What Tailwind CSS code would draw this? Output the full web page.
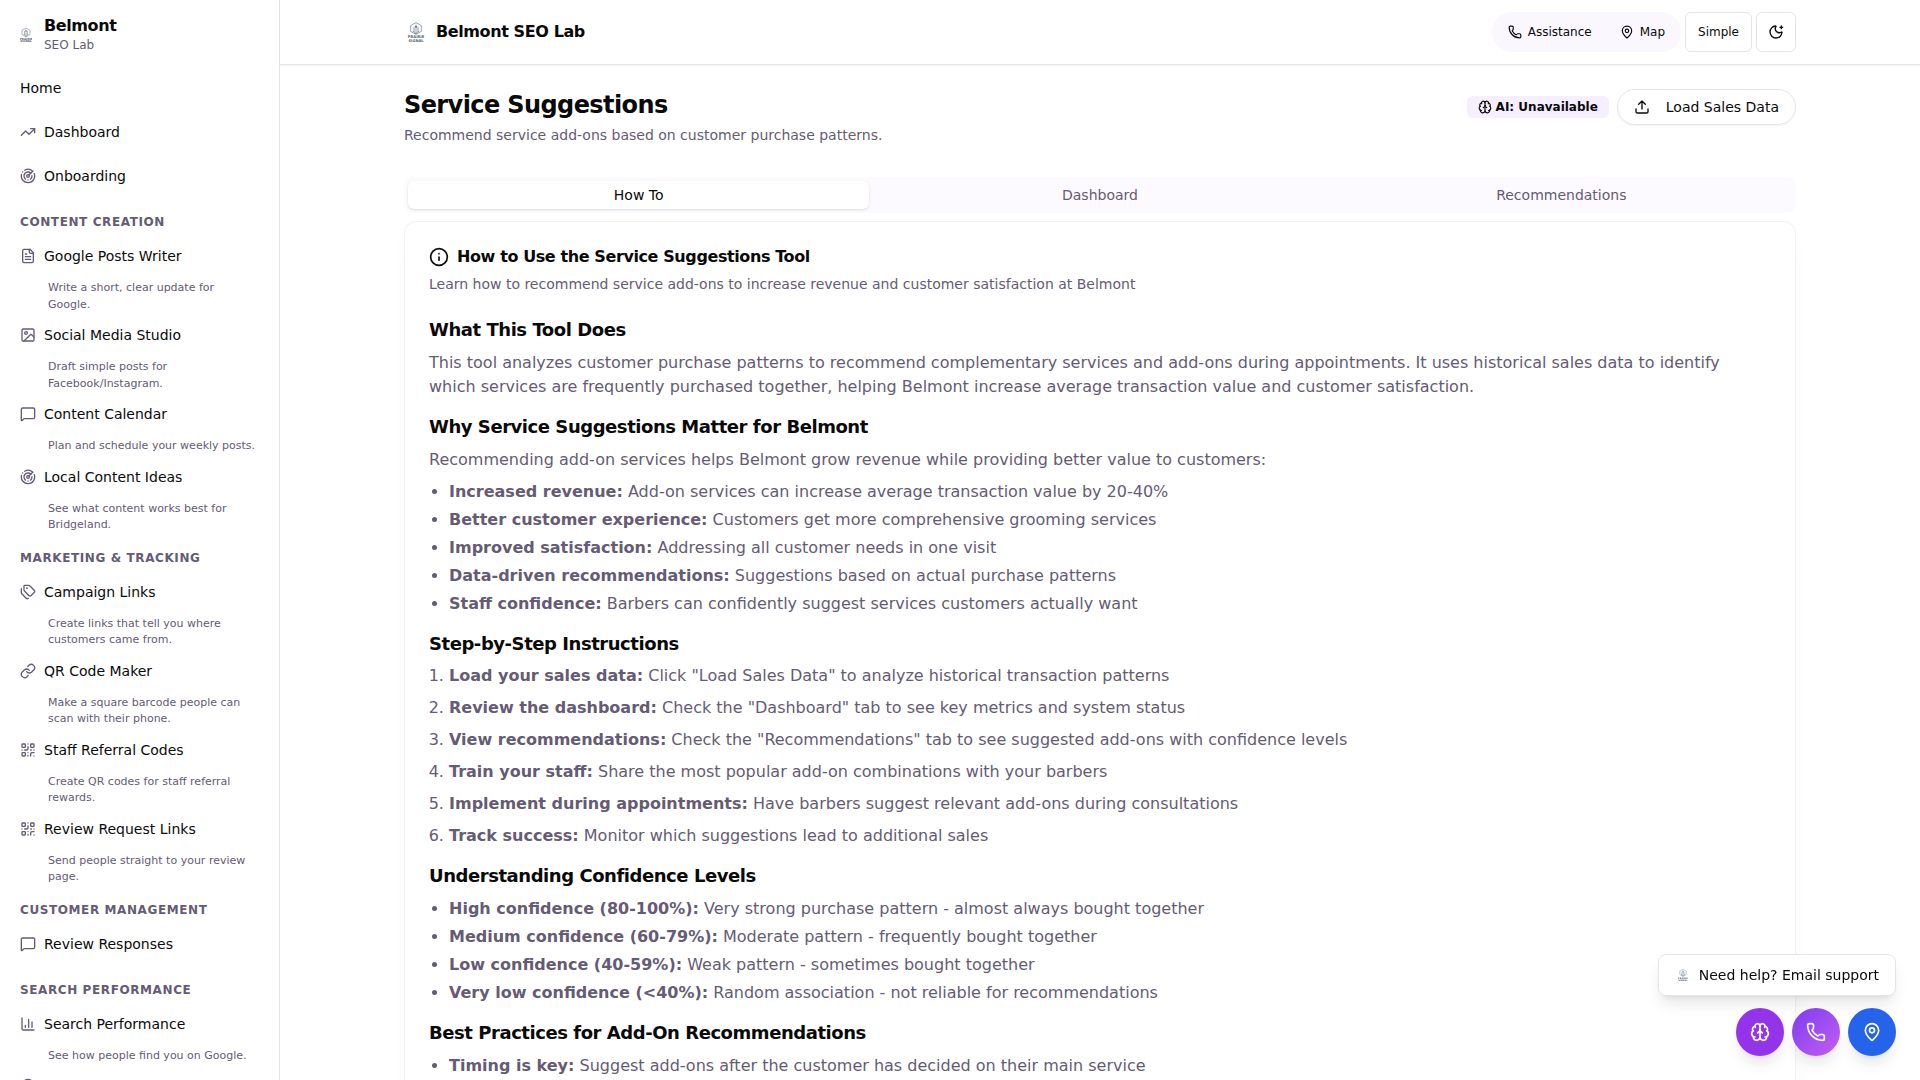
<!DOCTYPE html>
<html lang="en">
<head>
<meta charset="utf-8">
<meta name="viewport" content="width=device-width, initial-scale=1">
<title>Belmont SEO Lab</title>
<script src="https://cdn.jsdelivr.net/npm/@tailwindcss/browser@4"></script>
</head>
<body class="bg-white font-['DejaVu_Sans',sans-serif] text-[#0a0a0a]">

<svg class="hidden" aria-hidden="true">
  <symbol id="logo" viewBox="0 0 24 30">
    <g fill="none" stroke="#7b8794" stroke-width="1.200">
      <path d="M12 1l8 4.500v8.500l-8 4.500-8-4.500V5.500z"/>
      <path d="M12 4v14M9 7v8M15 7v8M7 14c2 0 4 2 5 4 1-2 3-4 5-4"/>
    </g>
    <circle cx="12" cy="7" r="1.500" fill="#64748b"/>
    <text x="12" y="24" text-anchor="middle" font-size="5.500" font-weight="700" fill="#566373">PRAIRIE</text>
    <text x="12" y="29.500" text-anchor="middle" font-size="5.500" font-weight="700" fill="#566373">SIGNAL</text>
  </symbol>
  <symbol id="trend" viewBox="0 0 24 24"><path d="m22 7-8.500 8.500-5-5L2 17"/><path d="M16 7h6v6"/></symbol>
  <symbol id="radar" viewBox="0 0 24 24"><path d="M19.070 4.930A10 10 0 0 0 6.990 3.340"/><path d="M4 6h.01"/><path d="M2.290 9.620A10 10 0 1 0 21.310 8.350"/><path d="M16.240 7.760A6 6 0 1 0 8.230 16.670"/><path d="M12 18h.01"/><path d="M17.990 11.660A6 6 0 0 1 15.770 16.670"/><circle cx="12" cy="12" r="2"/><path d="m13.410 10.590 5.660-5.660"/></symbol>
  <symbol id="file" viewBox="0 0 24 24"><path d="M15 2H6a2 2 0 0 0-2 2v16a2 2 0 0 0 2 2h12a2 2 0 0 0 2-2V7Z"/><path d="M14 2v4a2 2 0 0 0 2 2h4"/><path d="M10 9H8M16 13H8M16 17H8"/></symbol>
  <symbol id="image" viewBox="0 0 24 24"><rect width="18" height="18" x="3" y="3" rx="2"/><circle cx="9" cy="9" r="2"/><path d="m21 15-3.086-3.086a2 2 0 0 0-2.828 0L6 21"/></symbol>
  <symbol id="message" viewBox="0 0 24 24"><path d="M22 17a2 2 0 0 1-2 2H6.828a2 2 0 0 0-1.414.586l-2.202 2.202A.71.71 0 0 1 2 21.286V5a2 2 0 0 1 2-2h16a2 2 0 0 1 2 2z"/></symbol>
  <symbol id="tags" viewBox="0 0 24 24"><path d="M13.172 2a2 2 0 0 1 1.414.586l6.710 6.710a2.400 2.400 0 0 1 0 3.408l-4.592 4.592a2.400 2.400 0 0 1-3.408 0l-6.710-6.710A2 2 0 0 1 6 9.172V3a1 1 0 0 1 1-1z"/><path d="M2 7v6.172a2 2 0 0 0 .586 1.414l6.710 6.710a2.400 2.400 0 0 0 3.191.193"/><circle cx="10.500" cy="6.500" r=".5" fill="currentColor"/></symbol>
  <symbol id="link" viewBox="0 0 24 24"><path d="M10 13a5 5 0 0 0 7.540.54l3-3a5 5 0 0 0-7.070-7.070l-1.720 1.710"/><path d="M14 11a5 5 0 0 0-7.540-.54l-3 3a5 5 0 0 0 7.070 7.070l1.710-1.710"/></symbol>
  <symbol id="qr" viewBox="0 0 24 24"><rect width="5" height="5" x="3" y="3" rx="1"/><rect width="5" height="5" x="16" y="3" rx="1"/><rect width="5" height="5" x="3" y="16" rx="1"/><path d="M21 16h-3a2 2 0 0 0-2 2v3M21 21v.01M12 7v3a2 2 0 0 1-2 2H7M3 12h.01M12 3h.01M12 16v.01M16 12h1M21 12v.01M12 21v-1"/></symbol>
  <symbol id="chart" viewBox="0 0 24 24"><path d="M3 3v16a2 2 0 0 0 2 2h16M18 17V9M13 17V5M8 17v-3"/></symbol>
  <symbol id="pin" viewBox="0 0 24 24"><path d="M20 10c0 4.993-5.539 10.193-7.399 11.799a1 1 0 0 1-1.202 0C9.539 20.193 4 14.993 4 10a8 8 0 0 1 16 0"/><circle cx="12" cy="10" r="3"/></symbol>
  <symbol id="phone" viewBox="0 0 24 24"><path d="M13.832 16.568a1 1 0 0 0 1.213-.303l.355-.465A2 2 0 0 1 17 15h3a2 2 0 0 1 2 2v3a2 2 0 0 1-2 2A18 18 0 0 1 2 4a2 2 0 0 1 2-2h3a2 2 0 0 1 2 2v3a2 2 0 0 1-.8 1.600l-.468.351a1 1 0 0 0-.292 1.233 14 14 0 0 0 6.392 6.384"/></symbol>
  <symbol id="moon" viewBox="0 0 24 24"><path d="M18 5h4M20 3v4"/><path d="M20.985 12.486a9 9 0 1 1-9.473-9.472c.405-.022.617.46.402.803a6 6 0 0 0 8.268 8.268c.344-.215.825-.004.803.401"/></symbol>
  <symbol id="upload" viewBox="0 0 24 24"><path d="M12 3v12M17 8l-5-5-5 5M21 15v4a2 2 0 0 1-2 2H5a2 2 0 0 1-2-2v-4"/></symbol>
  <symbol id="info" viewBox="0 0 24 24"><circle cx="12" cy="12" r="10"/><path d="M12 16v-4M12 8h.01"/></symbol>
  <symbol id="brain" viewBox="0 0 24 24"><path d="M12 18V5"/><path d="M15 13a4.170 4.170 0 0 1-3-4 4.170 4.170 0 0 1-3 4"/><path d="M17.598 6.500A3 3 0 1 0 12 5a3 3 0 1 0-5.598 1.500"/><path d="M17.997 5.125a4 4 0 0 1 2.526 5.770"/><path d="M18 18a4 4 0 0 0 2-7.464"/><path d="M19.967 17.483A4 4 0 1 1 12 18a4 4 0 1 1-7.967-.517"/><path d="M6 18a4 4 0 0 1-2-7.464"/><path d="M6.003 5.125a4 4 0 0 0-2.526 5.770"/></symbol>
</svg>

<div class="flex h-screen overflow-hidden">
  <aside class="w-[280px] shrink-0 overflow-hidden border-r border-[#e5e5e5]">
    <div class="flex h-[66px] items-center gap-3 px-5 pt-1">
      <svg class="h-4 w-3 shrink-0"><use href="#logo"/></svg>
      <div>
        <div class="text-base leading-5 font-bold tracking-tight">Belmont</div>
        <div class="text-xs leading-[18px] text-[#655b74]">SEO Lab</div>
      </div>
    </div>
    <nav class="text-sm">
      <a href="#" class="flex h-11 items-center px-5">Home</a>
      <a href="#" class="flex h-11 items-center gap-2 px-5"><svg class="size-4 fill-none stroke-[#655b74] stroke-2" stroke-linecap="round" stroke-linejoin="round"><use href="#trend"/></svg>Dashboard</a>
      <a href="#" class="flex h-11 items-center gap-2 px-5"><svg class="size-4 fill-none stroke-[#655b74] stroke-2" stroke-linecap="round" stroke-linejoin="round"><use href="#radar"/></svg>Onboarding</a>

      <h2 class="px-5 pt-4 pb-1 text-xs leading-4 font-bold tracking-wider text-[#655b74] uppercase">Content Creation</h2>
      <a href="#" class="flex h-11 items-center gap-2 px-5"><svg class="size-4 fill-none stroke-[#655b74] stroke-2" stroke-linecap="round" stroke-linejoin="round"><use href="#file"/></svg>Google Posts Writer</a>
      <p class="pt-0.5 pr-5 pl-12 text-[11px] leading-normal text-[#655b74]">Write a short, clear update for Google.</p>
      <a href="#" class="flex h-11 items-center gap-2 px-5"><svg class="size-4 fill-none stroke-[#655b74] stroke-2" stroke-linecap="round" stroke-linejoin="round"><use href="#image"/></svg>Social Media Studio</a>
      <p class="pt-0.5 pr-5 pl-12 text-[11px] leading-normal text-[#655b74]">Draft simple posts for Facebook/Instagram.</p>
      <a href="#" class="flex h-11 items-center gap-2 px-5"><svg class="size-4 fill-none stroke-[#655b74] stroke-2" stroke-linecap="round" stroke-linejoin="round"><use href="#message"/></svg>Content Calendar</a>
      <p class="pt-0.5 pr-5 pl-12 text-[11px] leading-normal text-[#655b74]">Plan and schedule your weekly posts.</p>
      <a href="#" class="flex h-11 items-center gap-2 px-5"><svg class="size-4 fill-none stroke-[#655b74] stroke-2" stroke-linecap="round" stroke-linejoin="round"><use href="#radar"/></svg>Local Content Ideas</a>
      <p class="pt-0.5 pr-5 pl-12 text-[11px] leading-normal text-[#655b74]">See what content works best for Bridgeland.</p>

      <h2 class="px-5 pt-4 pb-1 text-xs leading-4 font-bold tracking-wider text-[#655b74] uppercase">Marketing &amp; Tracking</h2>
      <a href="#" class="flex h-11 items-center gap-2 px-5"><svg class="size-4 fill-none stroke-[#655b74] stroke-2" stroke-linecap="round" stroke-linejoin="round"><use href="#tags"/></svg>Campaign Links</a>
      <p class="pt-0.5 pr-5 pl-12 text-[11px] leading-normal text-[#655b74]">Create links that tell you where customers came from.</p>
      <a href="#" class="flex h-11 items-center gap-2 px-5"><svg class="size-4 fill-none stroke-[#655b74] stroke-2" stroke-linecap="round" stroke-linejoin="round"><use href="#link"/></svg>QR Code Maker</a>
      <p class="pt-0.5 pr-5 pl-12 text-[11px] leading-normal text-[#655b74]">Make a square barcode people can scan with their phone.</p>
      <a href="#" class="flex h-11 items-center gap-2 px-5"><svg class="size-4 fill-none stroke-[#655b74] stroke-2" stroke-linecap="round" stroke-linejoin="round"><use href="#qr"/></svg>Staff Referral Codes</a>
      <p class="pt-0.5 pr-5 pl-12 text-[11px] leading-normal text-[#655b74]">Create QR codes for staff referral rewards.</p>
      <a href="#" class="flex h-11 items-center gap-2 px-5"><svg class="size-4 fill-none stroke-[#655b74] stroke-2" stroke-linecap="round" stroke-linejoin="round"><use href="#qr"/></svg>Review Request Links</a>
      <p class="pt-0.5 pr-5 pl-12 text-[11px] leading-normal text-[#655b74]">Send people straight to your review page.</p>

      <h2 class="px-5 pt-4 pb-1 text-xs leading-4 font-bold tracking-wider text-[#655b74] uppercase">Customer Management</h2>
      <a href="#" class="flex h-11 items-center gap-2 px-5"><svg class="size-4 fill-none stroke-[#655b74] stroke-2" stroke-linecap="round" stroke-linejoin="round"><use href="#message"/></svg>Review Responses</a>

      <h2 class="px-5 pt-4 pb-1 text-xs leading-4 font-bold tracking-wider text-[#655b74] uppercase">Search Performance</h2>
      <a href="#" class="flex h-11 items-center gap-2 px-5"><svg class="size-4 fill-none stroke-[#655b74] stroke-2" stroke-linecap="round" stroke-linejoin="round"><use href="#chart"/></svg>Search Performance</a>
      <p class="pt-0.5 pr-5 pl-12 text-[11px] leading-normal text-[#655b74]">See how people find you on Google.</p>
      <a href="#" aria-label="Map" class="flex h-11 items-center gap-2 px-5"><svg class="size-4 fill-none stroke-[#655b74] stroke-2" stroke-linecap="round" stroke-linejoin="round"><use href="#pin"/></svg></a>
    </nav>
  </aside>

  <div class="flex min-w-0 flex-1 flex-col">
    <header class="border-b border-[#e5e5e5] shadow-xs">
      <div class="mx-auto flex h-16 max-w-[1440px] items-center justify-between px-6">
        <div class="flex items-center gap-2">
          <svg class="h-5 w-6"><use href="#logo"/></svg>
          <span class="text-base font-bold tracking-tight">Belmont SEO Lab</span>
        </div>
        <div class="flex items-center gap-1 text-xs">
          <div class="flex h-10 items-center rounded-full bg-[#faf7ff] px-1">
            <a href="#" class="flex h-8 items-center gap-1.5 px-3"><svg class="size-3.5 fill-none stroke-current stroke-2" stroke-linecap="round" stroke-linejoin="round"><use href="#phone"/></svg>Assistance</a>
            <a href="#" class="flex h-8 items-center gap-1.5 pr-3 pl-4"><svg class="size-3.5 fill-none stroke-current stroke-2" stroke-linecap="round" stroke-linejoin="round"><use href="#pin"/></svg>Map</a>
          </div>
          <button type="button" class="h-10 rounded-md border border-[#e5e5e5] px-3">Simple</button>
          <button type="button" aria-label="Toggle theme" class="flex size-10 items-center justify-center rounded-md border border-[#e5e5e5]"><svg class="size-4 fill-none stroke-current stroke-2" stroke-linecap="round" stroke-linejoin="round"><use href="#moon"/></svg></button>
        </div>
      </div>
    </header>

    <main class="min-h-0 flex-1 overflow-y-auto [scrollbar-width:none]">
      <div class="mx-auto max-w-[1440px] px-6 pt-6 pb-24">
        <div class="flex items-start justify-between">
          <div>
            <h1 class="text-2xl leading-8 font-bold tracking-tight">Service Suggestions</h1>
            <p class="mt-1 text-sm leading-5 text-[#655b74]">Recommend service add-ons based on customer purchase patterns.</p>
          </div>
          <div class="flex items-center gap-2">
            <span class="flex h-[22px] items-center gap-1 rounded-md bg-[#f5efff] px-[11px] text-xs font-bold"><svg class="size-3.5 fill-none stroke-current stroke-2" stroke-linecap="round" stroke-linejoin="round"><use href="#brain"/></svg>AI: Unavailable</span>
            <button type="button" class="flex h-9 items-center gap-4 rounded-full border border-[#e5e5e5] px-4 text-sm shadow-xs"><svg class="size-4 fill-none stroke-current stroke-2" stroke-linecap="round" stroke-linejoin="round"><use href="#upload"/></svg>Load Sales Data</button>
          </div>
        </div>

        <div role="tablist" class="mt-8 grid h-9 grid-cols-3 rounded-lg bg-[#fcfaff] p-1 text-sm text-[#655b74]">
          <button type="button" role="tab" aria-selected="true" class="rounded-md bg-white text-[#0a0a0a] shadow-sm">How To</button>
          <button type="button" role="tab" aria-selected="false">Dashboard</button>
          <button type="button" role="tab" aria-selected="false">Recommendations</button>
        </div>

        <section class="mt-2 rounded-xl border border-[#f1f1f1] bg-white p-6 shadow-xl shadow-black/5">
          <h2 class="flex h-[22px] items-center gap-2 text-base font-bold tracking-tight"><svg class="size-5 fill-none stroke-current stroke-2" stroke-linecap="round" stroke-linejoin="round"><use href="#info"/></svg>How to Use the Service Suggestions Tool</h2>
          <p class="mt-1.5 text-sm leading-5 text-[#655b74]">Learn how to recommend service add-ons to increase revenue and customer satisfaction at Belmont</p>

          <div class="mt-6 space-y-4 text-base leading-6 text-[#655b74]">
            <div>
              <h3 class="mb-2 text-lg leading-snug font-bold tracking-tight text-[#0a0a0a]">What This Tool Does</h3>
              <p>This tool analyzes customer purchase patterns to recommend complementary services and add-ons during appointments. It uses historical sales data to identify which services are frequently purchased together, helping Belmont increase average transaction value and customer satisfaction.</p>
            </div>
            <div>
              <h3 class="mb-2 text-lg leading-snug font-bold tracking-tight text-[#0a0a0a]">Why Service Suggestions Matter for Belmont</h3>
              <p class="mb-2">Recommending add-on services helps Belmont grow revenue while providing better value to customers:</p>
              <ul class="list-disc space-y-1 pl-5">
                <li><strong>Increased revenue:</strong> Add-on services can increase average transaction value by 20-40%</li>
                <li><strong>Better customer experience:</strong> Customers get more comprehensive grooming services</li>
                <li><strong>Improved satisfaction:</strong> Addressing all customer needs in one visit</li>
                <li><strong>Data-driven recommendations:</strong> Suggestions based on actual purchase patterns</li>
                <li><strong>Staff confidence:</strong> Barbers can confidently suggest services customers actually want</li>
              </ul>
            </div>
            <div>
              <h3 class="mb-2 text-lg leading-snug font-bold tracking-tight text-[#0a0a0a]">Step-by-Step Instructions</h3>
              <ol class="list-decimal space-y-2 pl-5">
                <li><strong>Load your sales data:</strong> Click "Load Sales Data" to analyze historical transaction patterns</li>
                <li><strong>Review the dashboard:</strong> Check the "Dashboard" tab to see key metrics and system status</li>
                <li><strong>View recommendations:</strong> Check the "Recommendations" tab to see suggested add-ons with confidence levels</li>
                <li><strong>Train your staff:</strong> Share the most popular add-on combinations with your barbers</li>
                <li><strong>Implement during appointments:</strong> Have barbers suggest relevant add-ons during consultations</li>
                <li><strong>Track success:</strong> Monitor which suggestions lead to additional sales</li>
              </ol>
            </div>
            <div>
              <h3 class="mb-2 text-lg leading-snug font-bold tracking-tight text-[#0a0a0a]">Understanding Confidence Levels</h3>
              <ul class="list-disc space-y-1 pl-5">
                <li><strong>High confidence (80-100%):</strong> Very strong purchase pattern - almost always bought together</li>
                <li><strong>Medium confidence (60-79%):</strong> Moderate pattern - frequently bought together</li>
                <li><strong>Low confidence (40-59%):</strong> Weak pattern - sometimes bought together</li>
                <li><strong>Very low confidence (&lt;40%):</strong> Random association - not reliable for recommendations</li>
              </ul>
            </div>
            <div>
              <h3 class="mb-2 text-lg leading-snug font-bold tracking-tight text-[#0a0a0a]">Best Practices for Add-On Recommendations</h3>
              <ul class="list-disc space-y-1 pl-5">
                <li><strong>Timing is key:</strong> Suggest add-ons after the customer has decided on their main service</li>
              </ul>
            </div>
          </div>
        </section>
      </div>
    </main>
  </div>
</div>

<!-- Floating help actions -->
<div class="fixed right-6 bottom-6 flex flex-col items-end gap-3">
  <a href="#" class="flex h-[42px] items-center gap-2 rounded-lg border border-[#e5e5e5] bg-white px-4 text-sm shadow-lg"><svg class="h-3 w-4"><use href="#logo"/></svg>Need help? Email support</a>
  <div class="flex gap-2 text-white">
    <button type="button" aria-label="AI assistant" class="flex size-12 items-center justify-center rounded-full bg-[#9333ea] shadow-lg"><svg class="size-5 fill-none stroke-current stroke-2" stroke-linecap="round" stroke-linejoin="round"><use href="#brain"/></svg></button>
    <button type="button" aria-label="Call" class="flex size-12 items-center justify-center rounded-full bg-linear-to-br from-[#7c3aed] to-[#c65cf3] shadow-lg"><svg class="size-5 fill-none stroke-current stroke-2" stroke-linecap="round" stroke-linejoin="round"><use href="#phone"/></svg></button>
    <button type="button" aria-label="Map" class="flex size-12 items-center justify-center rounded-full bg-[#2563eb] shadow-lg"><svg class="size-5 fill-none stroke-current stroke-2" stroke-linecap="round" stroke-linejoin="round"><use href="#pin"/></svg></button>
  </div>
</div>
</body>
</html>
